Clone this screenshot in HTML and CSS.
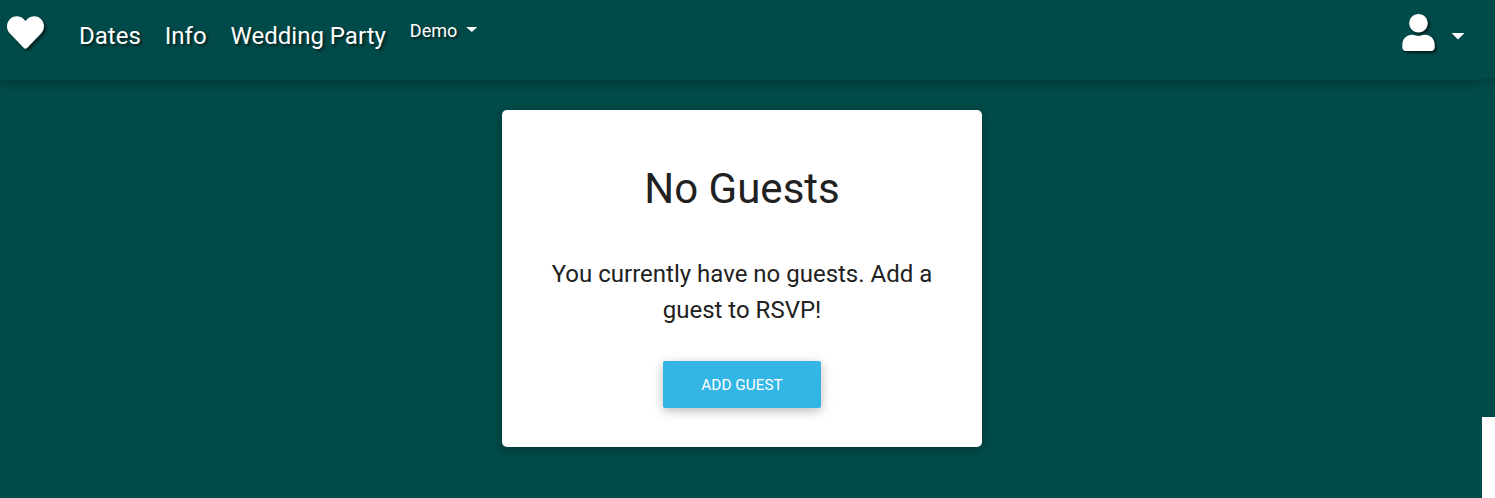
FILE: index.html
```
<!DOCTYPE html>
<html lang="en">
<head>
<meta charset="utf-8">
<title>Guests</title>
<link rel="stylesheet" href="styles.css">
</head>
<body>
<div class="page">
  <div class="main">
    <nav class="navbar">
      <a class="brand"><svg class="heart" viewBox="0 0 512 512"><path d="M462.3 62.6C407.5 15.9 326 24.3 275.7 76.2L256 96.5l-19.7-20.3C186.1 24.3 104.5 15.9 49.7 62.6c-62.8 53.6-66.1 149.8-9.9 207.9l193.5 199.8c12.5 12.9 32.8 12.9 45.3 0l193.5-199.8c56.3-58.1 53-154.3-9.8-207.9z"/></svg></a>
      <a class="link">Dates</a>
      <a class="link">Info</a>
      <a class="link">Wedding Party</a>
      <a class="demo">Demo<span class="caret"></span></a>
      <a class="account"><svg class="user" viewBox="0 0 448 512"><path d="M224 256c70.7 0 128-57.3 128-128S294.7 0 224 0 96 57.3 96 128s57.3 128 128 128zm89.6 32h-16.7c-22.2 10.2-46.9 16-72.9 16s-50.6-5.8-72.9-16h-16.7C60.2 288 0 348.2 0 422.4V464c0 26.5 21.5 48 48 48h352c26.5 0 48-21.5 48-48v-41.6c0-74.2-60.2-134.4-134.4-134.4z"/></svg><span class="caret caret-lg"></span></a>
    </nav>
    <section class="card">
      <h1 class="title">No Guests</h1>
      <p class="text">You currently have no guests. Add a guest to RSVP!</p>
      <button class="btn">ADD GUEST</button>
    </section>
  </div>
  <div class="gutter"><div class="gutter-fill"><div class="gutter-bar"></div></div></div>
</div>
</body>
</html>
```
FILE: styles.css
```
* { box-sizing: border-box; }
body {
  margin: 0;
  font-family: Roboto, "Liberation Sans", sans-serif;
  color: #212121;
  overflow: hidden;
}
.page { display: flex; height: 498px; }
.main { width: 1482px; background: #004b49; overflow: hidden; }
.gutter { width: 13px; background: #fff; }
.gutter-fill { height: 417px; background: #004b49; overflow: hidden; }
.gutter-bar { height: 78px; }
.navbar, .gutter-bar, .card, .btn {
  box-shadow: 0 3px 8px 0 rgba(0, 0, 0, .16), 0 3px 15px 0 rgba(0, 0, 0, .12);
}
.navbar {
  display: flex;
  align-items: flex-start;
  height: 80px;
  padding: 0 17px 0 7px;
  color: #fff;
  text-shadow: 2px 2px 3px rgba(0, 0, 0, .6);
}
.heart, .user {
  display: block;
  fill: #fff;
  filter: drop-shadow(2px 2px 1.5px rgba(0, 0, 0, .6));
}
.heart { width: 37px; height: 37px; }
.brand { margin: 14px 35px 0 0; }
.link { margin: 18px 24px 0 0; font-size: 24px; line-height: 36px; white-space: nowrap; }
.demo { display: flex; align-items: center; margin-top: 17px; font-size: 18px; line-height: 27px; }
.caret {
  width: 11px;
  height: 5px;
  margin: 0 0 2px 9px;
  background: #fff;
  clip-path: polygon(0 0, 100% 0, 50% 100%);
}
.caret-lg { width: 14px; height: 7px; margin: 7px 0 0 16px; }
.account { display: flex; align-items: center; margin: 14px 0 0 auto; }
.user { width: 33px; height: 37px; }
.card {
  width: 480px;
  height: 337px;
  margin: 30px auto 0 502px;
  padding: 49px 48px 0;
  background: #fff;
  border-radius: 5px;
  text-align: center;
}
.title { margin: 0; font-size: 42px; font-weight: 400; line-height: 60px; }
.text { margin: 37px 0 33px; font-size: 24px; line-height: 36px; }
.btn {
  width: 158px;
  height: 47px;
  padding: 1px 0 0;
  border: 0;
  border-radius: 2px;
  background: #33b5e5;
  color: #fff;
  font: 400 15.36px/22px Roboto, "Liberation Sans", sans-serif;
}
```
